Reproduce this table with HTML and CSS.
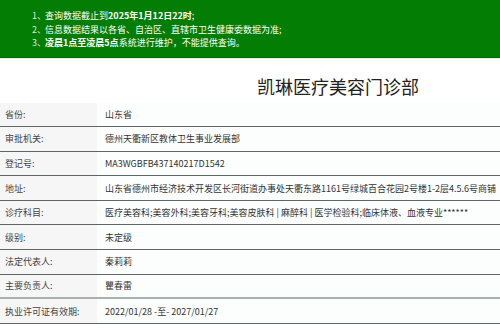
FILE: index.html
```html
<!DOCTYPE html>
<html lang="zh">
<head>
<meta charset="utf-8">
<title>凯琳医疗美容门诊部</title>
<link rel="stylesheet" href="styles.css">
</head>
<body>
<div class="notice">
  <p><span class="num">1、</span>查询数据截止到<b>2025年1月12日22时</b>;</p>
  <p><span class="num">2、</span>信息数据结果以各省、自治区、直辖市卫生健康委数据为准;</p>
  <p><span class="num">3、</span><b>凌晨1点至凌晨5点</b>系统进行维护，不能提供查询。</p>
</div>
<h1 class="title">凯琳医疗美容门诊部</h1>
<div class="info">
  <div class="row"><div class="label">省份:</div><div class="value">山东省</div></div>
  <div class="row"><div class="label">审批机关:</div><div class="value">德州天衢新区教体卫生事业发展部</div></div>
  <div class="row"><div class="label">登记号:</div><div class="value">MA3WGBFB437140217D1542</div></div>
  <div class="row"><div class="label">地址:</div><div class="value">山东省德州市经济技术开发区长河街道办事处天衢东路1161号绿城百合花园2号楼1-2层4.5.6号商铺</div></div>
  <div class="row"><div class="label">诊疗科目:</div><div class="value">医疗美容科;美容外科;美容牙科;美容皮肤科 | 麻醉科 | 医学检验科;临床体液、血液专业******</div></div>
  <div class="row"><div class="label">级别:</div><div class="value">未定级</div></div>
  <div class="row"><div class="label">法定代表人:</div><div class="value">秦莉莉</div></div>
  <div class="row light"><div class="label">主要负责人:</div><div class="value">瞿春雷</div></div>
  <div class="row"><div class="label">执业许可证有效期:</div><div class="value">2022/01/28 -至- 2027/01/27</div></div>
</div>
</body>
</html>
```
FILE: styles.css
```css
html, body {
  margin: 0;
  padding: 0;
  background: #ffffff;
}
body {
  font-family: "Noto Sans CJK SC", "Noto Sans", sans-serif;
  color: #333333;
  width: 500px;
  overflow: hidden;
}
.notice {
  background: #037d03;
  color: #ffffff;
  padding: 9px 0 7px 32px;
  font-size: 9px;
  line-height: 13.5px;
  border-bottom: 1px solid #046a04;
  box-shadow: 0 1px 0 #e6f3e2;
}
.notice p {
  margin: 0;
  white-space: nowrap;
}
.notice .num {
  display: inline-block;
  width: 13px;
  color: #d8ead8;
}
.notice b {
  font-weight: bold;
}
.title {
  margin: 0;
  padding: 18px 0 7px 257px;
  font-size: 18px;
  line-height: 20px;
  font-weight: normal;
  color: #222222;
  white-space: nowrap;
}
.info {
  display: flex;
  flex-direction: column;
}
.row {
  display: grid;
  grid-template-columns: 97px 1fr;
  height: 24.6px;
  box-sizing: border-box;
  border-bottom: 1px solid #5d6766;
  font-size: 9px;
}
.row.light {
  border-bottom: 2px solid #a9b1ae;
}
.label {
  background: #f6f6f6;
  padding-left: 5px;
  display: flex;
  align-items: center;
  color: #444444;
  white-space: nowrap;
}
.value {
  background: #fcfefe;
  padding-left: 8px;
  display: flex;
  align-items: center;
  color: #333333;
  white-space: nowrap;
}
```
